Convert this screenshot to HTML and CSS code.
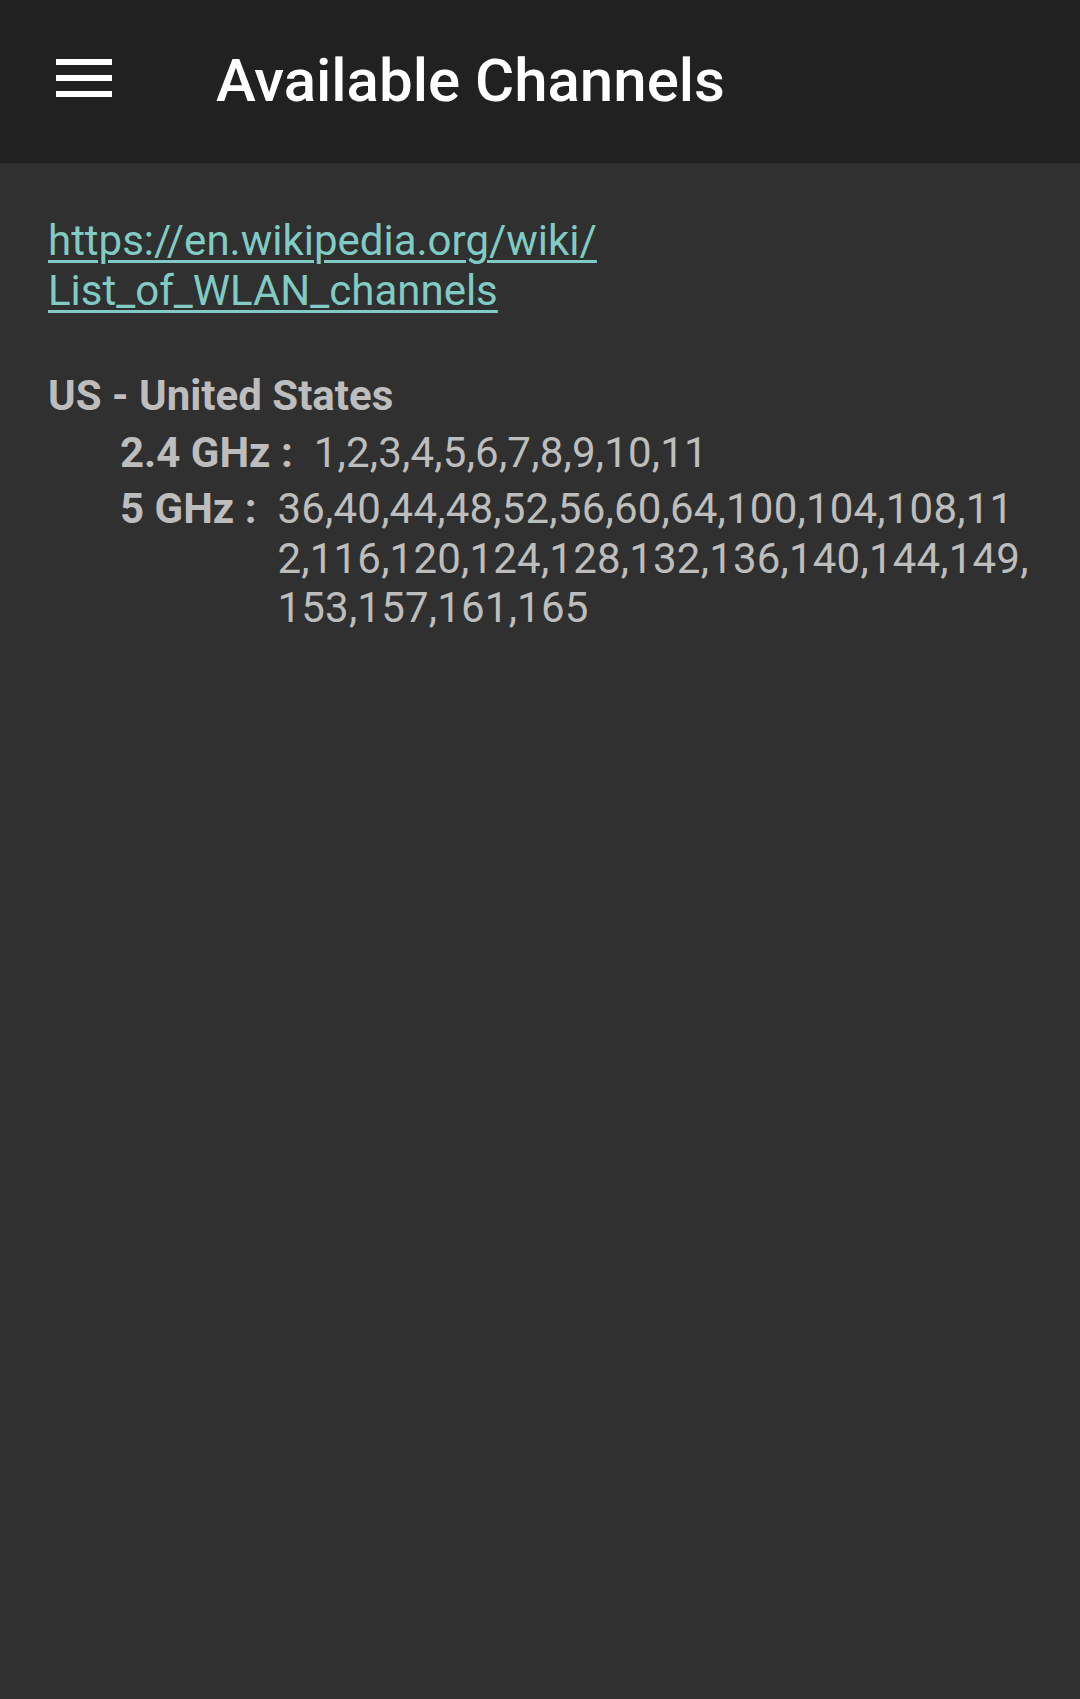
FILE: index.html
```html
<!DOCTYPE html>
<html lang="en">
<head>
<meta charset="utf-8">
<title>Available Channels</title>
<link rel="stylesheet" href="styles.css">
</head>
<body>
<header class="toolbar">
  <svg class="menu-icon" width="56" height="38" viewBox="0 0 56 38" aria-hidden="true">
    <rect x="0" y="0" width="56" height="6" fill="#ffffff"/>
    <rect x="0" y="16" width="56" height="6" fill="#ffffff"/>
    <rect x="0" y="32" width="56" height="6" fill="#ffffff"/>
  </svg>
  <h1 class="title">Available Channels</h1>
</header>
<main class="content">
  <a class="wiki-link" href="#">https://en.wikipedia.org/wiki/<br>List_of_WLAN_channels</a>
  <section class="country">
    <div class="country-name">US - United States</div>
    <div class="band-row">
      <span class="band-label">2.4 GHz :</span>
      <span class="band-value">1,2,3,4,5,6,7,8,9,10,11</span>
    </div>
    <div class="band-row">
      <span class="band-label">5 GHz :</span>
      <span class="band-value">36,40,44,48,52,56,60,64,100,104,108,112,116,120,124,128,132,136,140,144,149,153,157,161,165</span>
    </div>
  </section>
</main>
</body>
</html>
```

FILE: styles.css
```css
html, body {
  margin: 0;
  padding: 0;
}
body {
  width: 1080px;
  min-height: 1699px;
  background: #303030;
  font-family: Roboto, "Noto Sans", "Liberation Sans", sans-serif;
}
.toolbar {
  height: 163px;
  background: #212121;
  display: flex;
  align-items: flex-start;
  box-sizing: border-box;
}
.menu-icon {
  display: block;
  margin-top: 59px;
  margin-left: 56px;
  flex: none;
}
.title {
  margin: 46px 0 0 104px;
  font-size: 60px;
  line-height: 70px;
  font-weight: 500;
  color: #ffffff;
}
.content {
  padding: 53px 48px 0 48px;
}
.wiki-link {
  display: block;
  font-size: 42px;
  line-height: 49.5px;
  color: #80cbc4;
  text-decoration: underline;
  text-decoration-thickness: 3px;
  text-underline-offset: 5px;
}
.country {
  margin-top: 56px;
  color: #bdbdbd;
  font-size: 42px;
  line-height: 49.5px;
}
.country-name {
  font-weight: 700;
}
.band-row {
  display: flex;
  align-items: flex-start;
  margin-top: 7px;
  padding-left: 72px;
}
.band-label {
  flex: none;
  font-weight: 700;
  margin-right: 21px;
}
.band-value {
  flex: 1;
  min-width: 0;
  word-break: break-all;
  letter-spacing: 0.2px;
}
```
